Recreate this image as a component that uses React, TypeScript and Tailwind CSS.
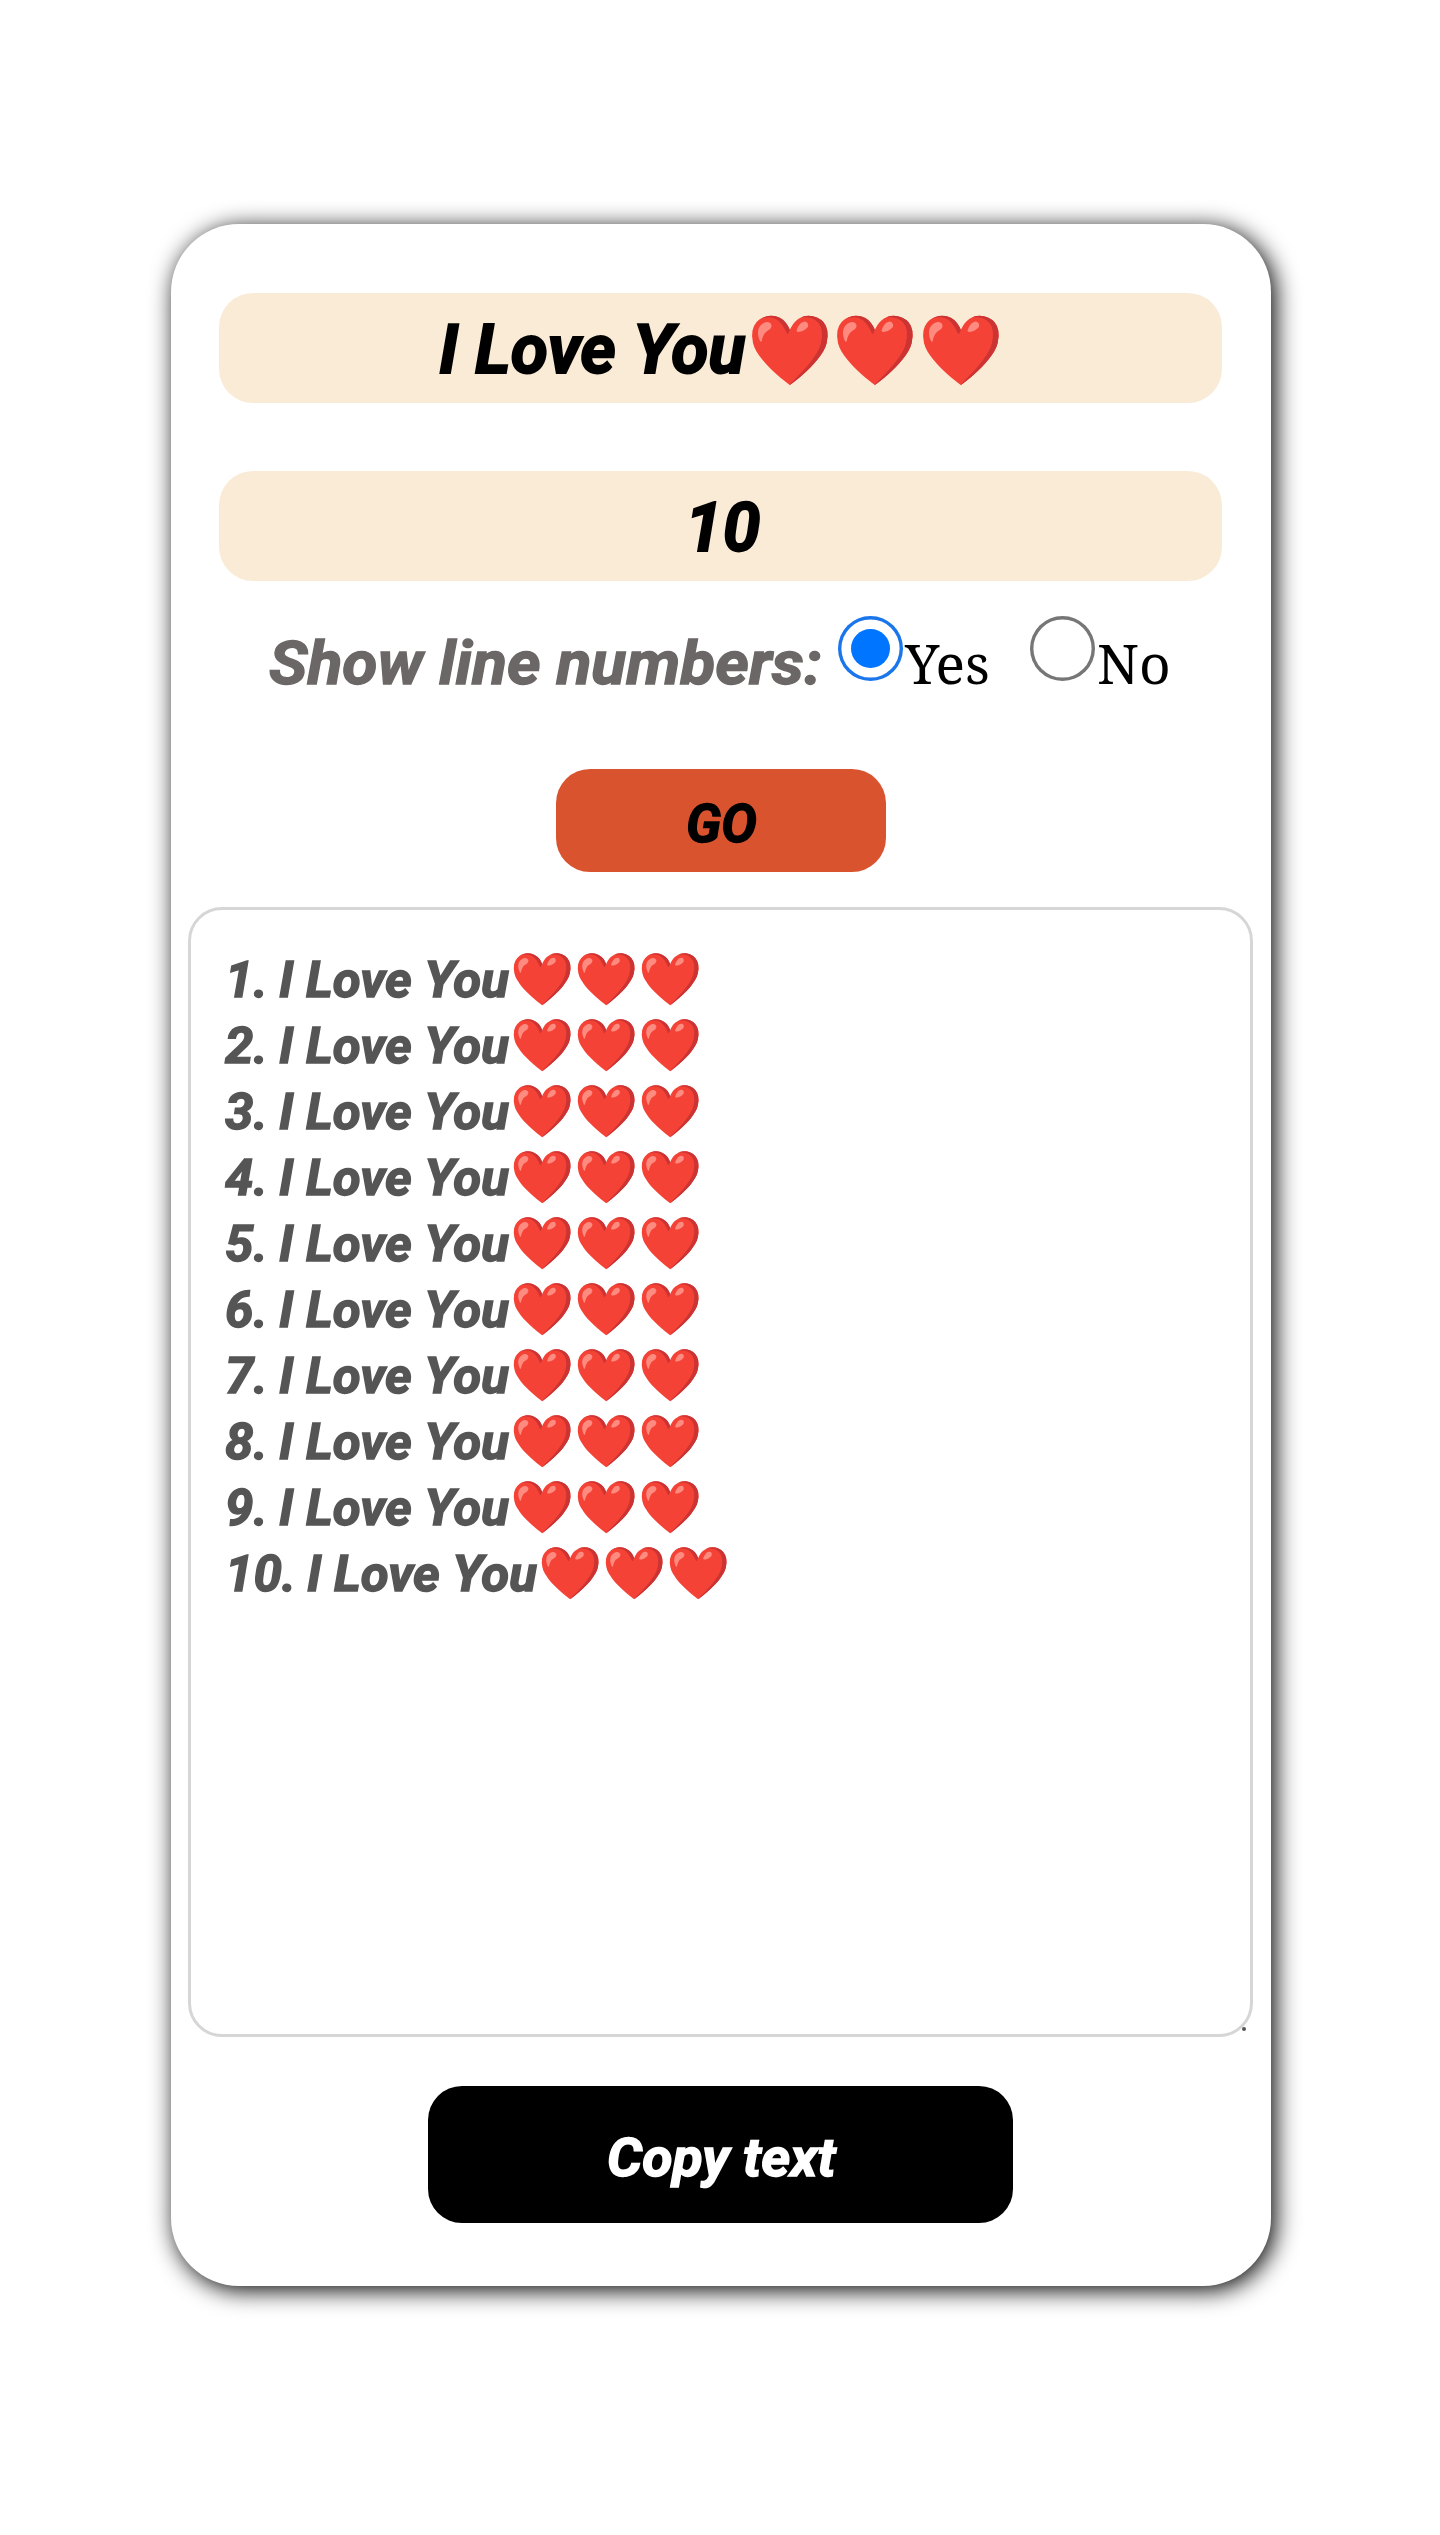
import React from "react";

type FittedProps = { text: string; box: string; inner: string };

/* Text condensed horizontally inside a box of known width. */
function Fitted({ text, box, inner }: FittedProps) {
  return (
    <span className={"block shrink-0 whitespace-pre " + box}>
      <span className={"inline-block origin-left whitespace-pre font-['Roboto'] font-bold italic " + inner}>{text}</span>
    </span>
  );
}

const hearts = "❤️❤️❤️";

export default function App() {
  const [numbered, setNumbered] = React.useState(true);
  const lines = Array.from({ length: 10 }, (_, i) => i + 1);

  return (
    <main className="h-[2535px] w-[1440px] bg-white pt-[224px] pl-[171px] text-black">
      <section className="flex h-[2062px] w-[1100px] flex-col rounded-[68px] bg-white shadow-[4px_4px_24px_#000]">
        <div className="mt-[69px] ml-[48px] flex h-[110px] w-[1003px] rounded-[34px] bg-[#faebd7] pt-[2px] pl-[220px] leading-[110px]">
          <Fitted text="I Love You" box="w-[308px]" inner="text-[69px] scale-x-[0.985] [-webkit-text-stroke:1.8px]" />
          <span className="pt-px font-['Noto_Color_Emoji'] text-[68.8px] whitespace-pre">{hearts}</span>
        </div>
        <div className="mt-[68px] ml-[48px] flex h-[110px] w-[1003px] rounded-[34px] bg-[#faebd7] pt-[2px] pl-[466px] leading-[110px]">
          <Fitted text="10" box="w-[80px]" inner="text-[69px] scale-x-[0.98] [-webkit-text-stroke:1.8px]" />
        </div>
        <div className="mt-[35px] ml-[98px] flex h-[92px]">
          <Fitted text="Show line numbers:" box="w-[569px] leading-[94px]" inner="text-[61.5px] scale-x-[1.045] text-[#6b6766] [-webkit-text-stroke:1.3px]" />
          <button onClick={() => setNumbered(true)} className="flex size-[65px] shrink-0 items-center justify-center rounded-full shadow-[inset_0_0_0_3.4px_#1a76ea]">
            <span className="size-[39px] rounded-full bg-[#0075ff]" />
          </button>
          <span className="w-[127px] pl-[2px] font-['Noto_Serif','DejaVu_Serif',serif] text-[55px] leading-[94px]">Yes</span>
          <button onClick={() => setNumbered(false)} className="size-[65px] shrink-0 rounded-full shadow-[inset_0_0_0_3.4px_#767676]" />
          <span className="pl-[2px] font-['Noto_Serif','DejaVu_Serif',serif] text-[55px] leading-[94px]">No</span>
        </div>
        <button className="mt-[61px] ml-[385px] flex h-[103px] w-[330px] rounded-[34px] bg-[#da532f] pt-[3px] pl-[130px] leading-[103px]">
          <Fitted text="GO" box="w-[80px] text-left" inner="text-[54px] scale-x-[0.985] [-webkit-text-stroke:1.4px]" />
        </button>
        <div className="relative mt-[35px] ml-[17px] h-[1130px] w-[1065px] rounded-[34px] border-3 border-[#d6d6d6] pt-[37px] pl-[34px]">
          {lines.map((n) => (
            <div key={n} className="flex h-[66px] leading-[66px] text-[#555555]">
              {numbered && (
                <Fitted text={n + "."} box={n > 9 ? "w-[82px]" : "w-[54px]"} inner="text-[50.5px] scale-x-[1.01] [-webkit-text-stroke:1.4px]" />
              )}
              <Fitted text="I Love You" box="w-[231px]" inner="text-[50.5px] scale-x-[1.01] [-webkit-text-stroke:1.4px]" />
              <span className="font-['Noto_Color_Emoji'] text-[51.6px] whitespace-pre">{hearts}</span>
            </div>
          ))}
          <span className="absolute right-[4px] bottom-[3px] size-[4px] rounded-full bg-[#555]" />
        </div>
        <button className="mt-[49px] ml-[257px] flex h-[137px] w-[585px] rounded-[34px] bg-black pt-[3px] pl-[179px] leading-[137px] text-white">
          <Fitted text="Copy text" box="w-[240px] text-left" inner="text-[54px] scale-x-[1.025] [-webkit-text-stroke:1.4px]" />
        </button>
      </section>
    </main>
  );
}
